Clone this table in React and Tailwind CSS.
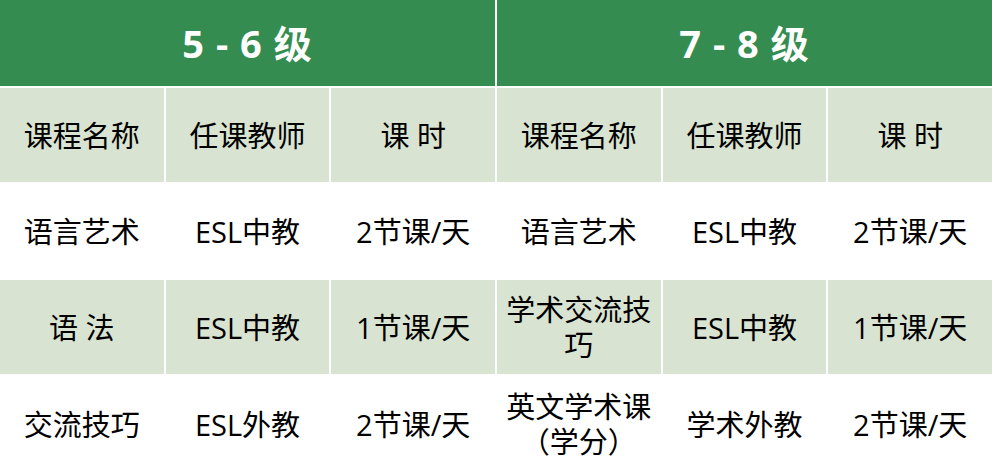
import React from "react";

const groups = [
  {
    title: "5 - 6 级",
    rows: [
      ["语言艺术", "ESL中教", "2节课/天"],
      ["语 法", "ESL中教", "1节课/天"],
      ["交流技巧", "ESL外教", "2节课/天"],
    ],
  },
  {
    title: "7 - 8 级",
    rows: [
      ["语言艺术", "ESL中教", "2节课/天"],
      ["学术交流技巧", "ESL中教", "1节课/天"],
      ["英文学术课（学分）", "学术外教", "2节课/天"],
    ],
  },
];

const heads = ["课程名称", "任课教师", "课 时"];

const font = { fontFamily: '"Open Sans", "Noto Sans CJK SC", sans-serif' };

const Cell = ({ children, shaded }) => (
  <div
    className={`flex items-center justify-center text-center px-1 text-[29px] leading-[35px] text-black ${
      shaded ? "bg-[#d8e4d1]" : "bg-white"
    }`}
  >
    <span className="max-w-[156px]">{children}</span>
  </div>
);

export default function App() {
  return (
    <div
      className="w-[992px] h-[472px] bg-white overflow-hidden grid grid-cols-6 gap-[2px] grid-rows-[86px_94px_94px_94px_1fr]"
      style={font}
    >
      {groups.map((g) => (
        <div
          key={g.title}
          className="col-span-3 bg-[#348c51] flex items-center justify-center text-white font-bold text-[38px] tracking-[1px]"
        >
          {g.title}
        </div>
      ))}
      {[...heads, ...heads].map((h, i) => (
        <Cell key={"h" + i} shaded>
          {h}
        </Cell>
      ))}
      {[0, 1, 2].map((r) =>
        [...groups[0].rows[r], ...groups[1].rows[r]].map((t, i) => (
          <Cell key={r + "-" + i} shaded={r === 1}>
            {t}
          </Cell>
        ))
      )}
    </div>
  );
}
